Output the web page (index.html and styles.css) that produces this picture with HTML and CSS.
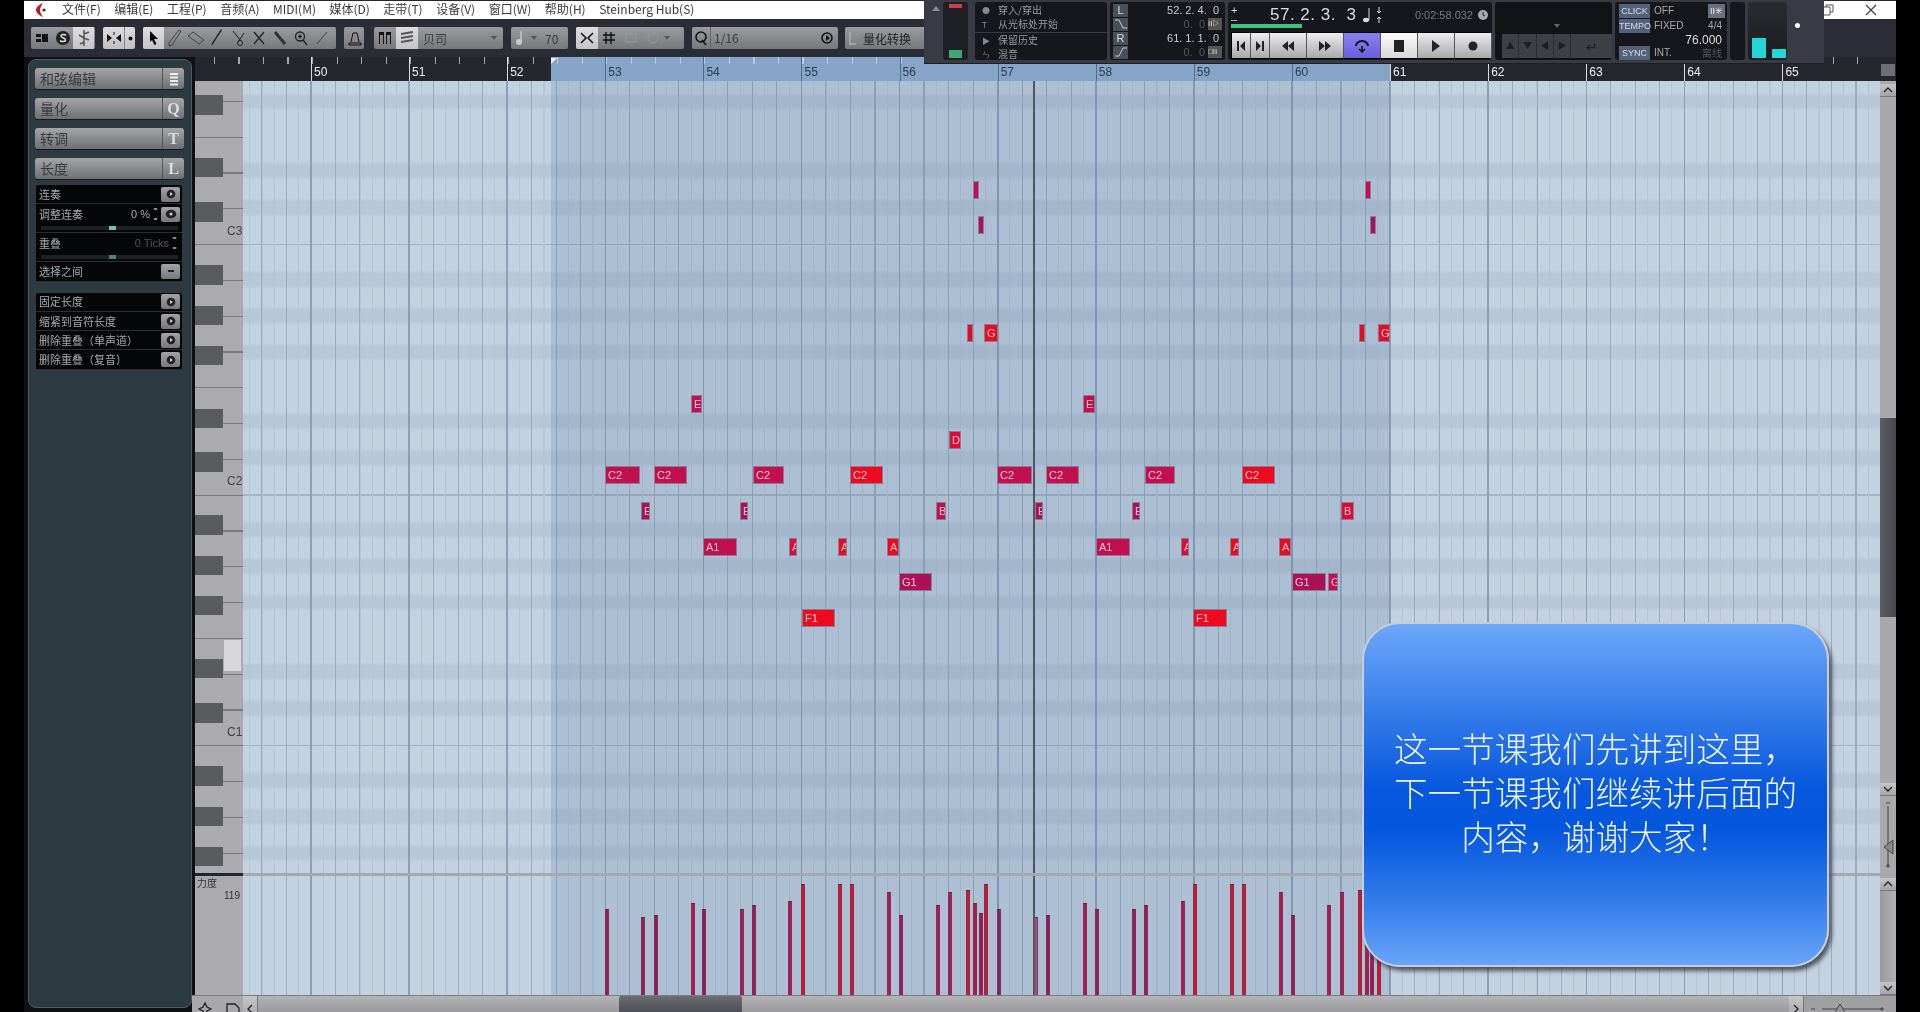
FILE: index.html
```html
<!DOCTYPE html>
<html lang="zh">
<head>
<meta charset="utf-8">
<title>Cubase</title>
<link rel="stylesheet" href="styles.css">
</head>
<body>
<div class="app">
  <header class="menubar">
    <svg class="logo" width="16" height="16" viewBox="0 0 16 16"><path d="M10 1C5 3 3 6 3 8c0 2 2 5 7 7-2-3-3-5-3-7s1-4 3-7z" fill="#c8102e"/><circle cx="11" cy="8" r="1.6" fill="#333"/></svg>
    <nav class="menu">
      <span>文件(F)</span><span>编辑(E)</span><span>工程(P)</span><span>音频(A)</span><span>MIDI(M)</span><span>媒体(D)</span><span>走带(T)</span><span>设备(V)</span><span>窗口(W)</span><span>帮助(H)</span><span>Steinberg Hub(S)</span>
    </nav>
    <div class="winctl">
      <svg width="12" height="12" viewBox="0 0 12 12"><path d="M1 3h7v8H1zM4 3V1h7v7H8" fill="none" stroke="#555"/></svg>
      <svg class="close" width="12" height="12" viewBox="0 0 12 12"><path d="M1 1l10 10M11 1L1 11" stroke="#444" stroke-width="1.3"/></svg>
    </div>
  </header>

  <div class="toolbar">
    <div class="tb w64">
      <span class="ti"><svg width="12" height="10" viewBox="0 0 12 10"><path d="M0 1h5v3H0zM0 6h5v3H0zM6 1h6v8H6z" fill="#111"/></svg></span>
      <span class="ti"><svg width="16" height="16" viewBox="0 0 16 16"><circle cx="8" cy="8" r="7" fill="#222"/><path d="M11 5.5C10 4 6 4 6 6c0 2 4.500 1.500 4.500 4 0 2-4.500 2-5.500 .5" fill="none" stroke="#ddd" stroke-width="1.500"/></svg></span>
      <span class="ti on"><svg width="14" height="18" viewBox="0 0 14 18"><path d="M7 1v16M7 5l5-2M7 9L2 6M7 9l5 2M7 13l-4 2" stroke="#555" stroke-width="1.500" fill="none"/></svg></span>
    </div>
    <div class="tb w32 lite">
      <span class="ti"><svg width="16" height="14" viewBox="0 0 16 14"><path d="M8 1v3M8 10v3" stroke="#111"/><path d="M1 3l5 4-5 4zM15 3l-5 4 5 4z" fill="#111"/></svg></span>
      <span class="ti narrow"><svg width="5" height="5" viewBox="0 0 5 5"><circle cx="2.500" cy="2.500" r="2" fill="#111"/></svg></span>
    </div>
    <div class="tb w192">
      <span class="ti on"><svg width="12" height="16" viewBox="0 0 12 16"><path d="M2 1l8 8H6l2.500 5-2 1L4 10l-2 2z" fill="#000"/></svg></span>
      <span class="ti"><svg width="14" height="18" viewBox="0 0 14 18"><path d="M11 1l2 1-9 14-3 1 0-3z" fill="none" stroke="#444"/></svg></span>
      <span class="ti"><svg width="18" height="14" viewBox="0 0 18 14"><path d="M1 5l5-4 11 8-5 4z" fill="none" stroke="#444"/></svg></span>
      <span class="ti"><svg width="14" height="18" viewBox="0 0 14 18"><path d="M12 1L3 15l-2 2 1-3L11 0z" fill="#222"/></svg></span>
      <span class="ti"><svg width="14" height="18" viewBox="0 0 14 18"><path d="M2 2l8 10M13 4L7 13" stroke="#222" fill="none"/><circle cx="9" cy="14" r="2.500" fill="none" stroke="#222"/></svg></span>
      <span class="ti"><svg width="14" height="16" viewBox="0 0 14 16"><path d="M2 2l10 12M12 2L2 14" stroke="#222" stroke-width="1.300"/></svg></span>
      <span class="ti"><svg width="14" height="16" viewBox="0 0 14 16"><path d="M2 2l10 12" stroke="#333" stroke-width="3"/></svg></span>
      <span class="ti"><svg width="16" height="16" viewBox="0 0 16 16"><circle cx="7" cy="6.500" r="4.500" fill="none" stroke="#222" stroke-width="1.300"/><path d="M10 10l4 5M5 6.500h4M7 4.500v4" stroke="#222" stroke-width="1.300"/></svg></span>
      <span class="ti"><svg width="14" height="16" viewBox="0 0 14 16"><path d="M2 14L12 2" stroke="#444"/></svg></span>
    </div>
    <div class="tb w19">
      <span class="ti"><svg width="14" height="16" viewBox="0 0 14 16"><path d="M1 15h12v-2H1zM3 12L5 3h4l2 9" fill="none" stroke="#111"/></svg></span>
    </div>
    <div class="tb w131 gap2">
      <span class="ti w22"><svg width="12" height="12" viewBox="0 0 12 12"><path d="M0 0h5v12H4V3H1v9H0zM7 0h5v12h-1V3H8v9H7z" fill="#111"/></svg></span>
      <span class="ti w22 on"><svg width="14" height="14" viewBox="0 0 14 14"><path d="M1 3l12-2M1 7l12-2M1 11l12-2" stroke="#555" stroke-width="2"/></svg></span>
      <span class="tlabel tight">贝司</span><i class="caret"></i>
    </div>
    <div class="tb w57">
      <span class="ti w18"><svg width="10" height="16" viewBox="0 0 10 16"><path d="M6 1v11" stroke="#c8c8c8" stroke-width="1.500"/><circle cx="4" cy="12" r="3" fill="#c8c8c8"/></svg></span>
      <i class="caret slim"></i><span class="tlabel num">70</span>
    </div>
    <div class="tb w108">
      <span class="ti w22 on"><svg width="14" height="12" viewBox="0 0 14 12"><path d="M1 1l5 5-5 5M13 1L8 6l5 5" fill="none" stroke="#111" stroke-width="1.500"/></svg></span>
      <span class="ti w22"><svg width="14" height="14" viewBox="0 0 14 14"><path d="M4 1v12M9 1v12M1 4h12M1 9h12" stroke="#111" stroke-width="1.400"/></svg></span>
      <span class="ti dimmed w22"><svg width="14" height="14" viewBox="0 0 14 14"><path d="M2 3h10v8H2z" fill="none" stroke="#999"/></svg></span>
      <span class="ti dimmed w22"><svg width="14" height="14" viewBox="0 0 14 14"><circle cx="7" cy="7" r="5" fill="none" stroke="#999"/></svg></span>
      <i class="caret"></i>
    </div>
    <div class="tb w146">
      <span class="ti w18"><svg width="14" height="16" viewBox="0 0 14 16"><circle cx="7" cy="7" r="5" fill="none" stroke="#111" stroke-width="1.600"/><path d="M8 10l4 5" stroke="#111" stroke-width="1.600"/></svg></span>
      <span class="tlabel flexgrow">1/16</span>
      <span class="ti w22"><svg width="12" height="14" viewBox="0 0 12 14"><circle cx="6" cy="7" r="5" fill="none" stroke="#111" stroke-width="1.600"/><path d="M5 4l4 3-4 3z" fill="#111"/></svg></span>
    </div>
    <div class="tb w82">
      <span class="ti dimmed w16"><svg width="10" height="14" viewBox="0 0 10 14"><path d="M2 1v12h6" fill="none" stroke="#aaa" stroke-width="1.500"/></svg></span>
      <span class="tlabel dark">量化转换</span>
    </div>
  </div>

  <div class="main">
    <aside class="side">
      <div class="panel">
        <div class="pbtn"><span>和弦编辑</span><b><svg width="10" height="14" viewBox="0 0 10 14"><path d="M1 2h8M1 5.500h8M1 9h8M1 12.500h8" stroke="#eee" stroke-width="2"/></svg></b></div>
        <div class="pbtn"><span>量化</span><b>Q</b></div>
        <div class="pbtn"><span>转调</span><b>T</b></div>
        <div class="pbtn"><span>长度</span><b>L</b></div>
        <div class="pgroup first">
          <div class="prow"><span>连奏</span><i class="pgo"><svg width="10" height="10" viewBox="0 0 10 10"><circle cx="5" cy="5" r="4.300" fill="#222"/><path d="M4 3l3 2-3 2z" fill="#ccc"/></svg></i></div>
          <div class="prow tall">
            <div class="pline"><span>调整连奏</span><em>0 %</em><u class="step"></u><i class="pgo"><svg width="12" height="10" viewBox="0 0 12 10"><ellipse cx="6" cy="5" rx="5.300" ry="4.300" fill="#222"/><circle cx="6" cy="5" r="1.500" fill="#ccc"/></svg></i></div>
            <div class="slide"><s></s></div>
          </div>
          <div class="prow tall">
            <div class="pline"><span>重叠</span><em class="dim">0 Ticks</em><u class="step"></u></div>
            <div class="slide"><s class="dimmer"></s></div>
          </div>
          <div class="prow"><span>选择之间</span><i class="pgo"><svg width="8" height="4" viewBox="0 0 8 4"><path d="M1 2h6" stroke="#222" stroke-width="2"/></svg></i></div>
        </div>
        <div class="pgroup">
          <div class="prow"><span>固定长度</span><i class="pgo"><svg width="10" height="10" viewBox="0 0 10 10"><circle cx="5" cy="5" r="4.300" fill="#222"/><path d="M4 3l3 2-3 2z" fill="#ccc"/></svg></i></div>
          <div class="prow"><span>缩紧到音符长度</span><i class="pgo"><svg width="10" height="10" viewBox="0 0 10 10"><circle cx="5" cy="5" r="4.300" fill="#222"/><path d="M4 3l3 2-3 2z" fill="#ccc"/></svg></i></div>
          <div class="prow"><span>删除重叠（单声道）</span><i class="pgo"><svg width="10" height="10" viewBox="0 0 10 10"><circle cx="5" cy="5" r="4.300" fill="#222"/><path d="M4 3l3 2-3 2z" fill="#ccc"/></svg></i></div>
          <div class="prow"><span>删除重叠（复音）</span><i class="pgo"><svg width="10" height="10" viewBox="0 0 10 10"><circle cx="5" cy="5" r="4.300" fill="#222"/><path d="M4 3l3 2-3 2z" fill="#ccc"/></svg></i></div>
        </div>
      </div>
    </aside>

    <section class="editor">
      <div class="rulerrow">
        <div class="ruler">
          <span class="bar">50</span><span class="bar">51</span><span class="bar">52</span><span class="bar sel">53</span><span class="bar sel">54</span><span class="bar sel">55</span><span class="bar sel">56</span><span class="bar sel">57</span><span class="bar sel">58</span><span class="bar sel">59</span><span class="bar sel">60</span><span class="bar">61</span><span class="bar">62</span><span class="bar">63</span><span class="bar">64</span><span class="bar">65</span>
          <i class="locmark"></i>
        </div>
        <div class="rulerend"><i></i></div>
      </div>

      <div class="noterow">
        <div class="keys">
          <span class="oct" style="top:143px">C3</span>
          <span class="oct" style="top:393px">C2</span>
          <span class="oct" style="top:644px">C1</span>
          <i class="hotkey"></i>
        </div>
        <div class="grid notes">
          <i class="n cr" style="left:730px;top:100px;width:6px"></i>
          <i class="n dk" style="left:735px;top:135px;width:6px"></i>
          <i class="n cr" style="left:1122px;top:100px;width:6px"></i>
          <i class="n dk" style="left:1127px;top:135px;width:6px"></i>
          <i class="n rd" style="left:724px;top:243px;width:6px"></i>
          <i class="n rd" style="left:741px;top:243px;width:14px">G</i>
          <i class="n rd" style="left:1116px;top:243px;width:6px"></i>
          <i class="n rd" style="left:1135px;top:243px;width:12px">G</i>
          <i class="n cr" style="left:448px;top:314px;width:11px">E</i>
          <i class="n cr" style="left:840px;top:314px;width:12px">E</i>
          <i class="n mi" style="left:706px;top:350px;width:12px">D</i>
          <i class="n cr" style="left:362px;top:385px;width:35px">C2</i>
          <i class="n cr" style="left:411px;top:385px;width:33px">C2</i>
          <i class="n cr" style="left:510px;top:385px;width:31px">C2</i>
          <i class="n rd" style="left:607px;top:385px;width:33px">C2</i>
          <i class="n cr" style="left:754px;top:385px;width:35px">C2</i>
          <i class="n cr" style="left:803px;top:385px;width:33px">C2</i>
          <i class="n cr" style="left:902px;top:385px;width:30px">C2</i>
          <i class="n rd" style="left:999px;top:385px;width:33px">C2</i>
          <i class="n dk" style="left:398px;top:421px;width:9px">E</i>
          <i class="n dk" style="left:497px;top:421px;width:8px">E</i>
          <i class="n cr" style="left:693px;top:421px;width:10px">B</i>
          <i class="n dk" style="left:792px;top:421px;width:8px">E</i>
          <i class="n dk" style="left:889px;top:421px;width:8px">E</i>
          <i class="n mi" style="left:1098px;top:421px;width:13px">B</i>
          <i class="n cr" style="left:460px;top:457px;width:34px">A1</i>
          <i class="n mi" style="left:546px;top:457px;width:8px">A</i>
          <i class="n rd" style="left:595px;top:457px;width:9px">A</i>
          <i class="n rd" style="left:644px;top:457px;width:12px">A</i>
          <i class="n cr" style="left:853px;top:457px;width:34px">A1</i>
          <i class="n mi" style="left:938px;top:457px;width:8px">A</i>
          <i class="n rd" style="left:987px;top:457px;width:9px">A</i>
          <i class="n rd" style="left:1036px;top:457px;width:12px">A</i>
          <i class="n dk" style="left:656px;top:492px;width:33px">G1</i>
          <i class="n dk" style="left:1049px;top:492px;width:34px">G1</i>
          <i class="n cr" style="left:1085px;top:492px;width:10px">G</i>
          <i class="n rd" style="left:559px;top:528px;width:33px">F1</i>
          <i class="n rd" style="left:950px;top:528px;width:34px">F1</i>
          <i class="playhead"></i>
        </div>
        <div class="vscroll">
          <i class="vb"><svg width="10" height="6" viewBox="0 0 10 6"><path d="M1 5l4-4 4 4" fill="none" stroke="#222" stroke-width="1.300"/></svg></i>
          <div class="vtrack"><s></s></div>
          <i class="vb"><svg width="10" height="6" viewBox="0 0 10 6"><path d="M1 1l4 4 4-4" fill="none" stroke="#222" stroke-width="1.300"/></svg></i>
          <div class="vzoom"><svg width="14" height="74" viewBox="0 0 14 74"><path d="M5 5h4M7 8v60M5 68h4M7 66v4" stroke="#444"/><path d="M12 42L3 49l9 7z" fill="#888" stroke="#444"/></svg></div>
        </div>
      </div>

      <div class="split"></div>

      <div class="velrow">
        <div class="velkeys"><span class="vellabel">力度</span><span class="velnum">119</span></div>
        <div class="grid vels">
          <i class="v dk" style="left:362px;height:86px"></i>
          <i class="v dk" style="left:398px;height:78px"></i>
          <i class="v dk" style="left:411px;height:80px"></i>
          <i class="v cr" style="left:448px;height:92px"></i>
          <i class="v dk" style="left:459px;height:86px"></i>
          <i class="v cr" style="left:497px;height:86px"></i>
          <i class="v dk" style="left:509px;height:90px"></i>
          <i class="v cr" style="left:545px;height:94px"></i>
          <i class="v rd" style="left:558px;height:111px"></i>
          <i class="v rd" style="left:595px;height:111px"></i>
          <i class="v rd" style="left:607px;height:111px"></i>
          <i class="v cr" style="left:644px;height:103px"></i>
          <i class="v dk" style="left:656px;height:80px"></i>
          <i class="v cr" style="left:693px;height:90px"></i>
          <i class="v cr" style="left:705px;height:103px"></i>
          <i class="v rd" style="left:723px;height:105px"></i>
          <i class="v cr" style="left:730px;height:92px"></i>
          <i class="v dk" style="left:736px;height:82px"></i>
          <i class="v rd" style="left:741px;height:111px"></i>
          <i class="v pu" style="left:754px;height:86px"></i>
          <i class="v pa" style="left:791px;height:78px"></i>
          <i class="v dk" style="left:803px;height:80px"></i>
          <i class="v cr" style="left:840px;height:92px"></i>
          <i class="v dk" style="left:852px;height:86px"></i>
          <i class="v dk" style="left:889px;height:86px"></i>
          <i class="v dk" style="left:901px;height:90px"></i>
          <i class="v cr" style="left:938px;height:94px"></i>
          <i class="v rd" style="left:950px;height:111px"></i>
          <i class="v rd" style="left:987px;height:111px"></i>
          <i class="v rd" style="left:999px;height:111px"></i>
          <i class="v cr" style="left:1036px;height:103px"></i>
          <i class="v dk" style="left:1048px;height:80px"></i>
          <i class="v cr" style="left:1084px;height:90px"></i>
          <i class="v cr" style="left:1097px;height:103px"></i>
          <i class="v rd" style="left:1115px;height:105px"></i>
          <i class="v cr" style="left:1122px;height:92px"></i>
          <i class="v dk" style="left:1127px;height:82px"></i>
          <i class="v rd" style="left:1134px;height:111px"></i>
          <i class="playhead"></i>
        </div>
        <div class="vscroll short">
          <i class="vb"><svg width="10" height="6" viewBox="0 0 10 6"><path d="M1 5l4-4 4 4" fill="none" stroke="#222" stroke-width="1.300"/></svg></i>
          <div class="vfill"></div>
          <i class="vb"><svg width="10" height="6" viewBox="0 0 10 6"><path d="M1 1l4 4 4-4" fill="none" stroke="#222" stroke-width="1.300"/></svg></i>
        </div>
      </div>

      <div class="hscroll">
        <div class="hcorner">
          <svg width="14" height="14" viewBox="0 0 14 14"><path d="M7 1l2 4 4 2-4 2-2 4-2-4-4-2 4-2z" fill="none" stroke="#222" stroke-width="1.300"/></svg>
          <svg width="14" height="12" viewBox="0 0 14 12"><path d="M1 1h8l4 4v6H1z" fill="none" stroke="#222" stroke-width="1.300"/></svg>
        </div>
        <i class="hb"><svg width="6" height="10" viewBox="0 0 6 10"><path d="M5 1L1 5l4 4" fill="none" stroke="#222" stroke-width="1.300"/></svg></i>
        <div class="htrack"><s></s></div>
        <i class="hb"><svg width="6" height="10" viewBox="0 0 6 10"><path d="M1 1l4 4-4 4" fill="none" stroke="#222" stroke-width="1.300"/></svg></i>
        <div class="hzoom"><svg width="80" height="14" viewBox="0 0 80 14"><path d="M3 7h4M14 7h60M72 7h4M74 5v4" stroke="#444"/><path d="M26 12l6-10 6 10z" fill="#999" stroke="#444"/></svg></div>
      </div>
    </section>
  </div>

  <div class="transport">
    <i class="tp-arrow"></i>
    <div class="tp-sec fader"><b class="led red"></b><b class="led green"></b></div>
    <div class="tp-sec modes">
      <div class="mrow"><i>●</i>穿入/穿出</div>
      <div class="mrow"><i>T</i>从光标处开始</div>
      <div class="mrow sep"><i>▶</i>保留历史</div>
      <div class="mrow"><i>ㄣ</i>混音</div>
    </div>
    <div class="tp-sec locs">
      <div class="lrow"><b class="lbtn">L</b><span>52. 2. 4.&nbsp;&nbsp;0</span></div>
      <div class="lrow"><b class="lbtn"><svg width="14" height="10" viewBox="0 0 14 10"><path d="M1 1h4l4 8h4" fill="none" stroke="#ccc"/></svg></b><span class="dim">0.&nbsp;&nbsp;0</span><b class="lmini">II▷</b></div>
      <div class="lrow"><b class="lbtn">R</b><span>61. 1. 1.&nbsp;&nbsp;0</span></div>
      <div class="lrow"><b class="lbtn"><svg width="14" height="10" viewBox="0 0 14 10"><path d="M1 9h4l4-8h4" fill="none" stroke="#ccc"/></svg></b><span class="dim">0.&nbsp;&nbsp;0</span><b class="lmini">□II</b></div>
    </div>
    <div class="tp-sec center">
      <div class="posline">
        <div class="plus"><span>+</span><span>–</span></div>
        <span class="bigpos">57. 2. 3.&nbsp;&nbsp;3</span>
        <svg width="22" height="20" viewBox="0 0 22 20"><ellipse cx="5" cy="15" rx="3" ry="2.200" fill="#ddd"/><path d="M8 15V3M18 2v6M18 12v6" stroke="#ddd"/><path d="M16 6l2 2 2-2M16 14l2-2 2 2" fill="none" stroke="#ddd"/></svg>
        <span class="timepos">0:02:58.032</span>
        <svg width="12" height="12" viewBox="0 0 12 12"><circle cx="6" cy="6" r="5" fill="#aaa"/><path d="M6 3v3l2 1" stroke="#222" fill="none"/></svg>
      </div>
      <div class="progress"></div>
      <div class="tbtns">
        <span class="tb1 nar"><svg width="10" height="10" viewBox="0 0 10 10"><path d="M1 0h2v10H1zM9 0v10L4 5z" fill="#222"/></svg></span>
        <span class="tb1 nar"><svg width="10" height="10" viewBox="0 0 10 10"><path d="M7 0h2v10H7zM1 0v10l5-5z" fill="#222"/></svg></span>
        <span class="tb1"><svg width="14" height="10" viewBox="0 0 14 10"><path d="M7 0v10L1 5zM13 0v10L7 5z" fill="#222"/></svg></span>
        <span class="tb1"><svg width="14" height="10" viewBox="0 0 14 10"><path d="M1 0v10l6-5zM7 0v10l6-5z" fill="#222"/></svg></span>
        <span class="tb1 cycle"><svg width="18" height="16" viewBox="0 0 18 16"><path d="M3 8a6 5 0 1 1 12 0" fill="none" stroke="#111" stroke-width="2"/><path d="M9 8v6M6 11l3 3 3-3" fill="none" stroke="#111" stroke-width="1.500"/></svg></span>
        <span class="tb1 stop"><svg width="10" height="12" viewBox="0 0 10 12"><path d="M0 0h10v12H0z" fill="#222"/></svg></span>
        <span class="tb1"><svg width="10" height="12" viewBox="0 0 10 12"><path d="M1 0v12l8-6z" fill="#222"/></svg></span>
        <span class="tb1"><svg width="10" height="12" viewBox="0 0 10 12"><circle cx="5" cy="6" r="4.500" fill="#222"/></svg></span>
      </div>
    </div>
    <div class="tp-sec marks">
      <div class="mtop"><i class="caret lightc"></i></div>
      <div class="mbtns"><span>▲</span><span>▼</span><span>◀</span><span>▶</span><span class="wide">↵</span></div>
    </div>
    <div class="tp-sec sync">
      <div class="syrow"><b>CLICK</b><span>OFF</span><em class="syicon">II✳</em></div>
      <div class="syrow"><b>TEMPO</b><span>FIXED</span><em>4/4</em></div>
      <div class="syrow tempo"><em>76.000</em></div>
      <div class="syrow"><b>SYNC</b><span>INT.</span><em class="dim">离线</em></div>
    </div>
    <div class="tp-sec blank"></div>
    <div class="tp-sec meters"><i class="m1"></i><i class="m2"></i></div>
    <div class="tp-end"><b></b></div>
  </div>

  <aside class="callout">这一节课我们先讲到这里，<br>下一节课我们继续讲后面的<br>内容，谢谢大家！</aside>
</div>
</body>
</html>
```

FILE: styles.css
```css
* { box-sizing: border-box; }
html, body { margin: 0; height: 100%; background: #000; overflow: hidden; }
body { font-family: "Noto Sans CJK SC", "Liberation Sans", sans-serif; }
i, em, s, u { font-style: normal; text-decoration: none; }

.app {
  position: relative;
  margin-left: 24px;
  width: 1872px;
  height: 1012px;
  padding-top: 1px;
  display: flex;
  flex-direction: column;
  background: #23262d;
  filter: blur(.45px);
}

/* menu */
.menubar {
  height: 18px;
  flex: none;
  background: #fff;
  display: flex;
  align-items: center;
  padding-left: 9px;
  font-size: 12px;
  color: #3a3a3a;
}
.logo { flex: none; }
.menu { display: flex; gap: 13.500px; margin: -2px 0 0 13px; white-space: nowrap; line-height: 18px; }
.winctl { margin-left: auto; display: flex; align-items: center; padding-right: 19px; }
.close { margin-left: 31px; }

/* toolbar */
.toolbar {
  height: 38px;
  flex: none;
  display: flex;
  align-items: center;
  gap: 8px;
  padding-left: 7px;
  background: #2a2d35;
}
.tb {
  height: 22px;
  display: flex;
  align-items: center;
  flex: none;
  border-radius: 2px;
  overflow: hidden;
  background: linear-gradient(#9a9b9f, #77787c);
  color: #333;
}
.lite { background: linear-gradient(#dcdcde, #c0c0c2); }
.w64 { width: 64px; }
.w32 { width: 32px; }
.w192 { width: 193px; }
.w19 { width: 20px; }
.w131 { width: 129px; margin-left: 2px; }
.w57 { width: 57px; }
.w108 { width: 108px; }
.w146 { width: 146px; }
.w82 { width: 88px; margin-left: -1px; }
.ti {
  width: 21px;
  height: 100%;
  display: flex;
  align-items: center;
  justify-content: center;
  flex: none;
}
.ti.narrow { width: 11px; border-left: 1px solid #888; }
.ti.w22 { width: 22px; }
.ti.w18 { width: 18px; }
.ti.w16 { width: 16px; }
.ti.on { background: linear-gradient(#dedee0, #c4c4c6); }
.tlabel { font-size: 12px; padding-left: 8px; color: #3b3c40; flex: 1; }
.tlabel.tight { padding-left: 5px; }
.tlabel.num { flex: none; padding-left: 2px; margin-left: 6px; }
.tlabel.dark { padding-left: 2px; color: #222; }
.flexgrow { flex: 1; border-left: 1px solid #666; height: 100%; line-height: 22px; padding-left: 3px; }
.caret {
  width: 0; height: 0;
  border: 3px solid transparent;
  border-top: 4px solid #555;
  border-bottom: 0;
  margin-right: 6px;
  flex: none;
}
.caret.slim { margin: 0 0 0 2px; }
.caret.lightc { border-top-color: #666; margin: 0; }

/* main */
.main { flex: 1; min-height: 0; display: flex; }
.side { width: 171px; flex: none; background: #0e1014; padding: 2px 3px 4px 4px; }
.panel {
  height: 100%;
  border: 1px solid #4e5a66;
  border-radius: 8px;
  background: #2e3a42;
  padding: 8px 7px 0 6px;
}
.pbtn {
  height: 21px;
  margin-bottom: 9px;
  display: flex;
  border-radius: 3px;
  overflow: hidden;
  background: linear-gradient(#a4a5a9, #6f7074);
  font-size: 14px;
  line-height: 21px;
  color: #37393d;
  box-shadow: 0 1px 0 #15191d;
}
.pbtn span { flex: 1; padding-left: 5px; }
.pbtn b {
  width: 22px;
  border-left: 1px solid #555;
  display: flex;
  align-items: center;
  justify-content: center;
  color: #ddd;
  font: bold 16px "Liberation Serif", serif;
}
.pgroup { margin: 0 2px 11px 1px; background: #050607; padding: 0; border-radius: 2px; }
.pgroup.first { margin-top: -3px; }
.prow {
  height: 19.300px;
  border-bottom: 1px solid #2a2e32;
  display: flex;
  align-items: center;
  justify-content: space-between;
  padding: 0 2px 0 3px;
  font-size: 11px;
  color: #a4a9ac;
  line-height: 1;
}
.prow.tall { height: 29px; display: block; padding-top: 2px; }
.pline { display: flex; align-items: center; height: 16px; }
.pline span { flex: 1; }
.pline em { font-family: "Liberation Sans", sans-serif; color: #aaa; font-size: 11px; }
.pline em.dim { color: #4f5256; }
.step { width: 7px; height: 12px; margin: 0 2px; border-top: 2px solid #888; border-bottom: 2px solid #888; flex: none; transform: scaleX(.5); }
.pgo {
  width: 19px; height: 15px;
  display: flex; align-items: center; justify-content: center;
  background: linear-gradient(#a3a4a8, #77787c);
  border-radius: 2px;
  flex: none;
}
.slide { height: 4px; margin: 4px 2px 0 2px; background: #1a2320; position: relative; }
.slide s { position: absolute; left: 68px; top: -.500px; width: 7px; height: 4px; background: #6fc3a8; }
.slide s.dimmer { background: #4f8573; }

/* editor */
.editor { flex: 1; min-width: 0; display: flex; flex-direction: column; }
.rulerrow { height: 24px; flex: none; display: flex; }
.ruler {
  position: relative;
  flex: 1;
  display: flex;
  padding-left: 116px;
  overflow: hidden;
  background:
    repeating-linear-gradient(90deg, rgba(220,220,220,.7) 18.900px, rgba(220,220,220,.7) 20px, transparent 20px, transparent 43.425px) 0 0 / 100% 7px no-repeat,
    linear-gradient(90deg, #25272c 356px, #86a5c6 356px, #86a5c6 1195px, #25272c 1195px);
}
.bar {
  width: 98.100px;
  flex: none;
  border-left: 1.500px solid #dcdcdc;
  padding: 8px 0 0 2px;
  font: 12px/15px "Liberation Sans Narrow", "Liberation Sans", sans-serif;
  color: #eee;
}
.bar.sel { color: #2c3b50; border-left-color: #4e6a8a; }
.locmark {
  position: absolute;
  left: 356px; top: 1px;
  border-left: 6px solid #eee;
  border-bottom: 6px solid transparent;
}
.rulerend { width: 16px; background: #25272c; padding-top: 7px; }
.rulerend i { display: block; width: 14px; height: 12px; margin-left: 1px; background: #6d6f74; }

.noterow { height: 792px; flex: none; display: flex; }
.keys {
  position: relative;
  width: 48px;
  flex: none;
  background:
    repeating-linear-gradient(180deg, #5a5b5f 77px, #5a5b5f 96px, transparent 96px, transparent 121px, #5a5b5f 121px, #5a5b5f 141px, transparent 141px, transparent 184px, #5a5b5f 184px, #5a5b5f 204px, transparent 204px, transparent 225px, #5a5b5f 225px, #5a5b5f 244px, transparent 244px, transparent 265px, #5a5b5f 265px, #5a5b5f 284px, transparent 284px, transparent 327.500px) 0 0 / 28px 100% no-repeat,
    repeating-linear-gradient(180deg, #77797d 19.800px, #77797d 21px, transparent 21px, transparent 55.600px),
    #ababaf;
}
.oct { position: absolute; left: 32px; font: 12px/14px "Liberation Sans", sans-serif; color: #3d3f44; }
.hotkey { position: absolute; left: 29px; top: 559px; width: 17px; height: 31px; background: #d8d8dc; }

.grid { position: relative; flex: 1; min-width: 0; overflow: hidden; background-color: #c3d2e1; }
.grid::before {
  content: "";
  position: absolute;
  top: 0; bottom: 0;
  left: 308px;
  width: 839px;
  background: rgba(70, 105, 150, .18);
}
.notes {
  background-image:
    repeating-linear-gradient(90deg, #8aa0b7 67.300px, #8aa0b7 68.800px, transparent 68.800px, transparent 165.400px),
    repeating-linear-gradient(90deg, #98abbf 18.300px, #98abbf 19.400px, transparent 19.400px, transparent 42.825px),
    repeating-linear-gradient(90deg, #b6c5d5 6.200px, #b6c5d5 7.300px, transparent 7.300px, transparent 18.460px),
    repeating-linear-gradient(180deg, #a0b2c5 163px, #a0b2c5 164px, transparent 164px, transparent 413.500px),
    repeating-linear-gradient(180deg, transparent 38px, transparent 80px, rgba(95,120,150,.12) 84px, rgba(95,120,150,.12) 95px, transparent 99px, transparent 117px, rgba(95,120,150,.12) 121px, rgba(95,120,150,.12) 132px, transparent 136px, transparent 189px, rgba(95,120,150,.12) 193px, rgba(95,120,150,.12) 204px, transparent 208px, transparent 225px, rgba(95,120,150,.12) 229px, rgba(95,120,150,.12) 240px, transparent 244px, transparent 262px, rgba(95,120,150,.12) 266px, rgba(95,120,150,.12) 276px, transparent 280px, transparent 288.500px);
}
.vels {
  background-image:
    repeating-linear-gradient(90deg, #8aa0b7 67.300px, #8aa0b7 68.800px, transparent 68.800px, transparent 165.400px),
    repeating-linear-gradient(90deg, #98abbf 18.300px, #98abbf 19.400px, transparent 19.400px, transparent 42.825px),
    repeating-linear-gradient(90deg, #b6c5d5 6.200px, #b6c5d5 7.300px, transparent 7.300px, transparent 18.460px);
}
.n {
  position: absolute;
  height: 18px;
  border: 1px solid #8b7d98;
  overflow: hidden;
  font: 11px/16px "Liberation Sans", sans-serif;
  color: #f3c6cd;
  padding-left: 2px;
  white-space: nowrap;
}
.cr { background: #c2104e; }
.dk { background: #aa1257; }
.mi { background: #dc0c38; }
.rd { background: #ee0a1e; }
.pu { background: #8d1c5a; }
.pa { background: #b24a80; }
.playhead { position: absolute; left: 790px; top: 0; bottom: 0; width: 2px; background: #505660; }
.vscroll { width: 16px; flex: none; background: #a9a9ab; display: flex; flex-direction: column; padding-top: 3px; }
.vb {
  height: 13px;
  flex: none;
  display: flex; align-items: center; justify-content: center;
  background: linear-gradient(#c6c6c8, #a4a4a6);
  border-bottom: 1px solid #777;
}
.vtrack { height: 686px; flex: none; }
.vtrack s { display: block; margin-top: 321px; height: 199px; background: linear-gradient(90deg, #5c5e63, #44464b); }
.vzoom { flex: 1; padding: 2px 0 0 1px; }
.vscroll.short { padding-top: 2px; }
.vfill { flex: 1; background: linear-gradient(90deg, #9a9a9c, #b2b2b4); }

.split { height: 3px; flex: none; background: #a5a9ad; margin-left: 48px; }
.velrow { height: 119px; flex: none; display: flex; }
.velkeys { width: 48px; flex: none; background: #ababaf; position: relative; color: #333; font-size: 10px; }
.vellabel { position: absolute; left: 2px; top: 0; line-height: 13px; }
.velnum { position: absolute; right: 3px; top: 13px; font: 10px/13px "Liberation Sans", sans-serif; }
.v {
  position: absolute;
  bottom: 0;
  width: 4px;
  border: 1px solid #6f3a5a;
  border-bottom: 0;
  border-top-color: #5e2740;
}

.hscroll { flex: 1; display: flex; background: linear-gradient(#b4b4b6, #8c8c8e); border-top: 1px solid #7b7d80; margin-left: -3px; }
.hcorner { width: 51px; flex: none; display: flex; align-items: center; justify-content: space-between; padding: 0 3px 0 6px; background: #a8a8aa; }
.hb { width: 15px; flex: none; display: flex; align-items: center; justify-content: center; background: linear-gradient(#c6c6c8, #a2a2a4); border-right: 1px solid #777; }
.htrack { flex: 1; }
.htrack s { display: block; margin-left: 361px; width: 123px; height: 100%; background: linear-gradient(#6b6d72, #3d3f44); border-radius: 2px; }
.hzoom { width: 92px; flex: none; padding: 1px 0 0 4px; background: #a0a0a2; }

/* transport */
.transport {
  position: absolute;
  left: 900px;
  top: 0;
  width: 900px;
  height: 64px;
  display: flex;
  gap: 3px;
  padding: 2px 0 3px 19px;
  background: #383b43;
  border-bottom: 1px solid #1c1e23;
  color: #bbb;
  font: 11px/14px "Noto Sans CJK SC", "Liberation Sans", sans-serif;
}
.tp-arrow { position: absolute; left: 8px; top: 6px; border: 4px solid transparent; border-bottom: 5px solid #8a8d94; border-top: 0; }
.tp-sec { background: #15171c; border-radius: 3px; flex: none; }
.fader { width: 25px; position: relative; display: flex; flex-direction: column; justify-content: space-between; align-items: center; padding: 2px 0; background: #1e2025; }
.led { width: 13px; height: 4px; background: #c9404a; display: block; }
.led.green { height: 8px; background: #3fa76f; }
.modes { width: 132px; margin-left: 4px; padding: 1px 0; }
.mrow { height: 14px; padding-left: 7px; color: #99999c; font-size: 10px; white-space: nowrap; }
.mrow i { display: inline-block; width: 16px; font-size: 8px; color: #888; }
.mrow.sep { border-top: 1px solid #383b43; margin-top: 1px; padding-top: 0; height: 15px; }
.locs { width: 115px; padding: 1px 3px 0 3px; }
.lrow { display: flex; align-items: center; justify-content: flex-end; height: 14px; font: 11px/14px "Liberation Sans", sans-serif; color: #ccc; }
.lrow span { margin-left: auto; padding-right: 3px; }
.lrow .dim { color: #55585e; }
.lbtn { width: 15px; height: 13px; display: flex; align-items: center; justify-content: center; background: #4a5058; color: #ddd; font-weight: normal; flex: none; }
.lmini { width: 14px; font: 8px/12px "Liberation Sans", sans-serif; background: #555; color: #ddd; overflow: hidden; flex: none; white-space: nowrap; }
.center { width: 264px; padding: 0 3px; }
.posline { height: 22px; padding-top: 3px; display: flex; align-items: center; color: #ddd; }
.plus { width: 39px; display: flex; flex-direction: column; font: 11px/9px "Liberation Sans", sans-serif; }
.bigpos { font: 17px/20px "Liberation Sans", sans-serif; letter-spacing: .5px; width: 91px; white-space: nowrap; }
.timepos { font: 11px/14px "Liberation Sans", sans-serif; margin: 0 4px 0 auto; color: #77797e; }
.progress { width: 71px; height: 4px; margin: 0 0 4px; background: #3fc47e; }
.tbtns { height: 27px; display: flex; background: #000; padding: 1px; }
.tb1 {
  width: 37px;
  display: flex; align-items: center; justify-content: center;
  background: linear-gradient(#ececee, #a9a9ab);
  border-right: 1px solid #555;
  flex: none;
}
.tb1.nar { width: 19px; }
.tb1.cycle { background: linear-gradient(#8a7ff0, #6a5fdc); }
.tb1.stop { background: linear-gradient(#fafafa, #d8d8da); }
.marks { width: 117px; display: flex; flex-direction: column; justify-content: space-between; background: #111317; padding: 0 0 2px 7px; }
.mtop { height: 26px; display: flex; justify-content: center; align-items: flex-end; }
.mbtns { height: 24px; display: flex; gap: 1px; background: #2b2d33; }
.mbtns span { flex: 1; background: #3e4046; color: #1d1e22; font-size: 9px; line-height: 24px; text-align: center; overflow: hidden; }
.mbtns .wide { flex: 2.500; font-size: 14px; }
.sync { width: 112px; padding: 1px 2px 1px 4px; font: 10px/14px "Liberation Sans", sans-serif; }
.syrow { height: 15.500px; display: flex; align-items: center; gap: 4px; color: #aaa; }
.syrow b { width: 31px; height: 14px; font-weight: normal; text-align: center; background: #55617a; color: #d8dce4; font-size: 9px; flex: none; }
.syrow em { margin-left: auto; padding-right: 3px; }
.syrow em.syicon { background: #6a7080; color: #eee; padding: 0 2px; font-size: 9px; }
.syrow em.dim { color: #55585e; font-family: "Noto Sans CJK SC", sans-serif; }
.syrow.tempo { height: 11px; font-size: 12px; color: #ddd; }
.blank { width: 15px; }
.meters { width: 39px; display: flex; align-items: flex-end; gap: 6px; padding: 0 1px 2px 4px; background: linear-gradient(#2a2c32, #1a1c20); }
.meters i { width: 14px; background: #24d6d6; }
.m1 { height: 20px; }
.m2 { height: 9px; }
.tp-end { flex: 1; position: relative; }
.tp-end b { position: absolute; left: 5px; top: 21px; width: 5px; height: 5px; border-radius: 50%; background: #fff; }

/* callout */
.callout {
  position: absolute;
  left: 1338px;
  top: 622px;
  width: 467px;
  height: 345px;
  padding-top: 102px;
  border-radius: 38px;
  border: 2px solid #c9ced4;
  background: linear-gradient(#6ba6f9 0%, #3a80ec 24%, #0758de 48%, #0456dd 60%, #2f7aea 80%, #68a4f8 100%);
  box-shadow: 3px 4px 4px rgba(40, 45, 55, .75);
  color: #eef4fb;
  font: 300 33.600px/44px "Noto Sans CJK SC", sans-serif;
  text-align: center;
  white-space: nowrap;
}
```
